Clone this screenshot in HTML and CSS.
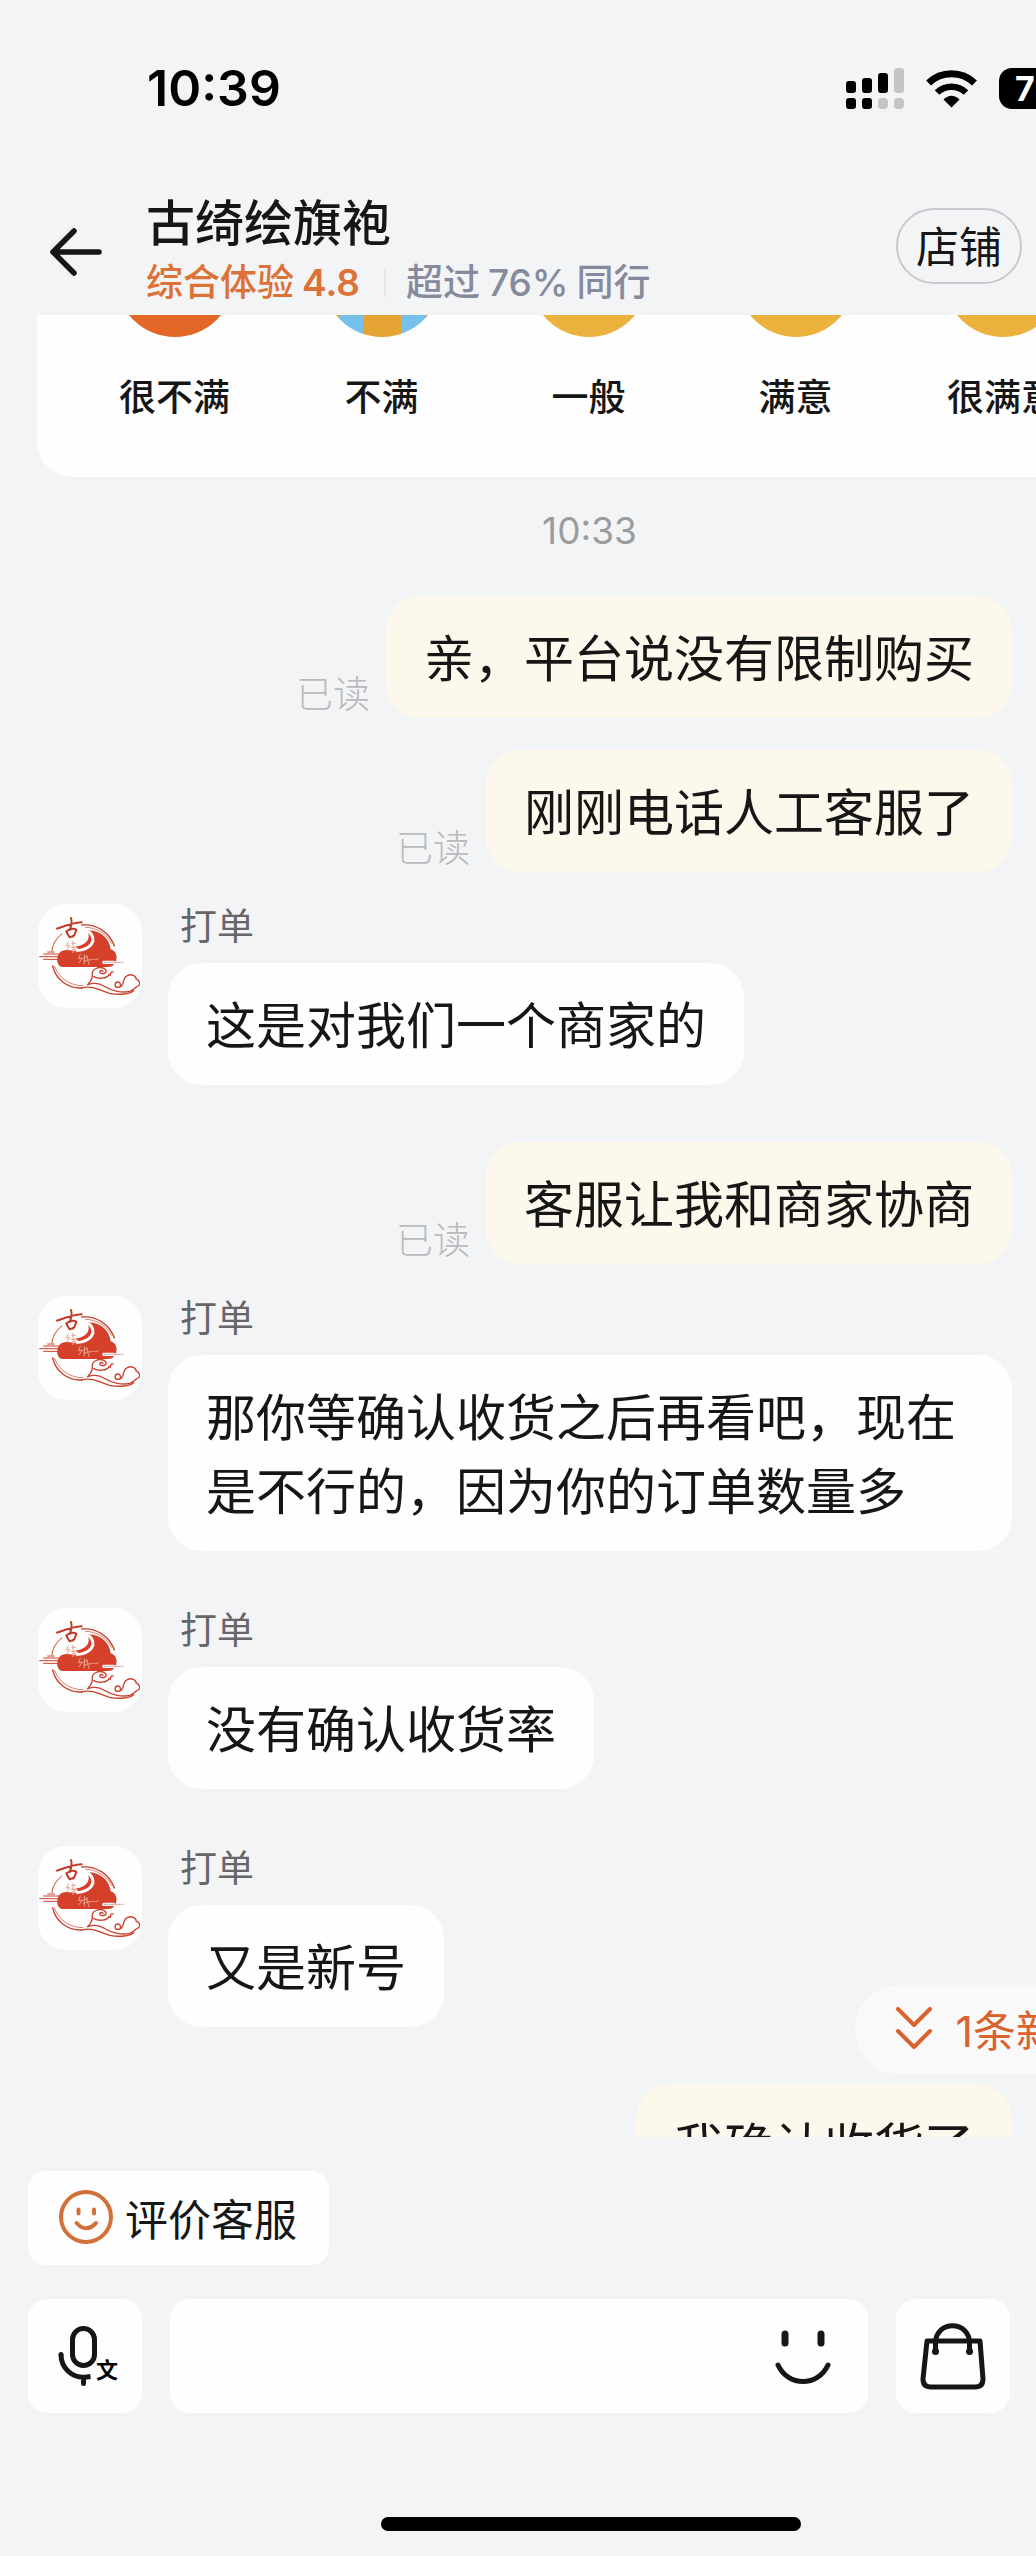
FILE: index.html
```
<!DOCTYPE html>
<html lang="zh-CN">
<head>
    <meta charset="UTF-8">
    <meta name="viewport" content="width=device-width, initial-scale=1.0">
    <title>古绮绘旗袍</title>
    <link rel="stylesheet" href="styles.css">
</head>
<body>
    <!-- 店铺头像 -->
    <svg class="defs" width="0" height="0" aria-hidden="true">
        <symbol id="logo" viewBox="55 42 312 312">
            <g fill="none" stroke="#c9402c" stroke-linecap="round">
                <path d="M186 105C230 100 270 128 284 168" stroke-width="4"/>
                <path d="M198 112C232 112 262 134 276 160" stroke-width="2"/>
                <path d="M126 132C108 148 98 164 97 182" stroke-width="3"/>
                <path d="M99 228C108 268 144 296 186 294" stroke-width="4"/>
                <path d="M104 228C116 262 150 288 190 287" stroke-width="2"/>
                <path d="M60 200H122M72 192H120M72 208H122M84 186H104" stroke-width="3"/>
                <path d="M204 284C222 278 240 280 252 288C274 302 306 310 330 304C344 300 348 290 358 286C364 278 356 268 350 268C348 254 330 250 318 260C310 268 314 274 308 284C302 296 286 294 286 284C288 272 304 274 302 286" stroke-width="4"/>
                <path d="M186 294C220 284 246 304 270 310C300 316 330 312 342 302M204 284C212 276 218 268 218 256C214 236 240 228 254 236C266 244 256 254 244 250C234 244 246 238 250 244M222 260C238 268 262 266 268 254C276 262 268 242 280 246" stroke-width="4"/>
            </g>
            <path d="M206 120C248 122 270 150 273 178C290 182 296 204 286 218C282 226 276 231 264 231H128C108 228 108 190 128 182C144 176 160 184 176 182C200 184 238 160 206 120Z" fill="#d5402b"/>
            <path d="M166 168C192 166 212 154 204 128C228 148 212 172 176 177Z" fill="#d5402b"/>
            <path d="M208 122C236 150 218 180 170 183" fill="none" stroke="#fff" stroke-width="6"/>
            <path d="M204 128C212 152 192 166 160 170" fill="none" stroke="#fff" stroke-width="3"/>
            <g fill="none" stroke="#c23a28" stroke-width="6" stroke-linecap="round" stroke-linejoin="round">
                <path d="M112 116C134 108 160 98 186 97M154 84C158 96 154 110 150 120M140 124C150 116 164 114 170 120C168 128 164 136 160 140M140 124C142 132 148 138 150 142L164 136"/>
            </g>
            <g fill="none" stroke="#e9a08f" stroke-width="3" stroke-linecap="round" stroke-linejoin="round">
                <path d="M146 156L140 168L150 166L142 180M156 160H168M160 154V188M154 172H170M164 174L170 186"/>
                <path d="M182 192L176 206L188 204L178 218M194 194V222M188 206L204 200M192 214L210 208M200 196L208 224M210 212C218 202 222 214 236 206"/>
            </g>
            <rect x="248" y="212" width="38" height="10" rx="4" fill="#fff"/>
            <path d="M254 217H312" stroke="#c98a7e" stroke-width="3" stroke-dasharray="5 2"/>
        </symbol>
    </svg>

    <div class="status-bar">
        <span class="clock">10:39</span>
        <div class="status-icons">
            <svg class="signal" viewBox="0 0 58 41" aria-hidden="true">
                <g fill="#000">
                    <rect x="0" y="13" width="10" height="12" rx="3"/>
                    <rect x="16" y="10" width="10" height="15" rx="3"/>
                    <rect x="32" y="5" width="10" height="20" rx="3"/>
                    <rect x="0" y="30" width="10" height="11" rx="3"/>
                    <rect x="16" y="30" width="10" height="11" rx="3"/>
                </g>
                <g fill="#c3c4c6">
                    <rect x="48" y="0" width="10" height="25" rx="3"/>
                    <rect x="32" y="30" width="10" height="11" rx="4"/>
                    <rect x="48" y="30" width="10" height="11" rx="4"/>
                </g>
            </svg>
            <svg class="wifi" viewBox="0 0 51 41" aria-hidden="true">
                <path d="M2.5 15A33 33 0 0 1 48.500 15" fill="none" stroke="#000" stroke-width="7"/>
                <path d="M11 24.500A21 21 0 0 1 40 24.500" fill="none" stroke="#000" stroke-width="6.500"/>
                <path d="M17.500 31.500Q25.500 24 33.500 31.500L25.500 39.500Z"/>
            </svg>
            <span class="battery">71</span>
        </div>
    </div>

    <header class="header">
        <button class="back" type="button" aria-label="返回">
            <svg viewBox="0 0 52 48" aria-hidden="true">
                <path d="M24 3L3 24L24 45M3 24H49" fill="none" stroke="#161616" stroke-width="5.500" stroke-linecap="round" stroke-linejoin="round"/>
            </svg>
        </button>
        <div class="shop">
            <h1>古绮绘旗袍</h1>
            <p class="score">
                <span class="rate">综合体验<b>4.8</b></span>
                <span class="rank">超过<b>76%</b>同行</span>
            </p>
        </div>
        <button class="shop-btn" type="button">店铺</button>
    </header>

    <main class="chat">
        <section class="rating-card">
            <button type="button" class="rating"><span class="face angry"></span>很不满</button>
            <button type="button" class="rating"><span class="face crying"></span>不满</button>
            <button type="button" class="rating"><span class="face"></span>一般</button>
            <button type="button" class="rating"><span class="face"></span>满意</button>
            <button type="button" class="rating"><span class="face"></span>很满意</button>
        </section>

        <time class="time">10:33</time>

        <div class="msg mine">
            <span class="read">已读</span>
            <p class="bubble">亲，平台说没有限制购买</p>
        </div>
        <div class="msg mine">
            <span class="read">已读</span>
            <p class="bubble">刚刚电话人工客服了</p>
        </div>
        <div class="msg theirs">
            <svg class="avatar" aria-hidden="true"><use href="#logo"/></svg>
            <div class="content">
                <span class="name">打单</span>
                <p class="bubble">这是对我们一个商家的</p>
            </div>
        </div>
        <div class="msg mine">
            <span class="read">已读</span>
            <p class="bubble">客服让我和商家协商</p>
        </div>
        <div class="msg theirs">
            <svg class="avatar" aria-hidden="true"><use href="#logo"/></svg>
            <div class="content">
                <span class="name">打单</span>
                <p class="bubble">那你等确认收货之后再看吧，现在是不行的，因为你的订单数量多</p>
            </div>
        </div>
        <div class="msg theirs">
            <svg class="avatar" aria-hidden="true"><use href="#logo"/></svg>
            <div class="content">
                <span class="name">打单</span>
                <p class="bubble">没有确认收货率</p>
            </div>
        </div>
        <div class="msg theirs">
            <svg class="avatar" aria-hidden="true"><use href="#logo"/></svg>
            <div class="content">
                <span class="name">打单</span>
                <p class="bubble">又是新号</p>
            </div>
        </div>
        <div class="msg mine">
            <p class="bubble">我确认收货了</p>
        </div>

        <button class="new-msg" type="button">
            <svg viewBox="0 0 36 42" aria-hidden="true">
                <path d="M2 2L18 18L34 2M2 24L18 40L34 24" fill="none" stroke="#d9622f" stroke-width="4" stroke-linecap="round" stroke-linejoin="round"/>
            </svg>
            1条新消息
        </button>
    </main>

    <footer class="footer">
        <button class="rate-btn" type="button">
            <svg viewBox="0 0 54 54" aria-hidden="true">
                <g fill="none" stroke="#d2703a" stroke-width="4" stroke-linecap="round">
                    <circle cx="27" cy="27" r="25"/>
                    <path d="M19.500 19.500V23.500M35 19.500V23.500M17.500 33Q27 43.500 37 33"/>
                </g>
            </svg>
            评价客服
        </button>
        <div class="input-row">
            <button class="square-btn" type="button" aria-label="语音转文字">
                <svg viewBox="0 0 114 114" aria-hidden="true">
                    <rect x="44.500" y="29.500" width="22" height="37" rx="11" fill="none" stroke="#161616" stroke-width="5"/>
                    <path d="M33 55.500C33 69 44 79 57 78.200L62.500 77.500M55.500 79V84.500" fill="none" stroke="#161616" stroke-width="5" stroke-linejoin="round"/>
                    <circle cx="33" cy="55.500" r="2.500" fill="#161616"/>
                    <circle cx="55.500" cy="84.500" r="2.500" fill="#161616"/>
                    <text class="mic-text" x="68" y="79">文</text>
                </svg>
            </button>
            <div class="input-box">
                <input type="text" aria-label="输入消息">
                <button class="emoji-btn" type="button" aria-label="表情">
                    <svg viewBox="0 0 56 56" aria-hidden="true">
                        <path d="M10 6V15M46 6V15" fill="none" stroke="#161616" stroke-width="7" stroke-linecap="round"/>
                        <path d="M3 37C13 59 43 59 53 37" fill="none" stroke="#161616" stroke-width="5" stroke-linecap="round"/>
                    </svg>
                </button>
            </div>
            <button class="square-btn" type="button" aria-label="购物袋">
                <svg viewBox="0 0 114 114" aria-hidden="true">
                    <g fill="none" stroke="#161616" stroke-width="5" stroke-linejoin="round">
                        <path d="M31 42H84L87 80Q87 88 79 88H35Q27 88 27 80Z"/>
                        <path d="M39.500 52V44C39.500 21 73.500 21 73.500 44V52"/>
                    </g>
                    <circle cx="39.500" cy="52.500" r="3.500" fill="#161616"/>
                    <circle cx="73.500" cy="52.500" r="3.500" fill="#161616"/>
                </svg>
            </button>
        </div>
        <div class="home-bar"></div>
    </footer>
</body>
</html>
```
FILE: styles.css
```
* {
    box-sizing: border-box;
}
body {
    display: flex;
    flex-direction: column;
    height: 100vh;
    margin: 0;
    overflow: hidden;
    background-color: #f3f4f6;
    color: #161616;
    font-family: Inter, "Noto Sans CJK SC", sans-serif;
}
h1, p {
    margin: 0;
}
button {
    padding: 0;
    border: none;
    background: none;
    color: inherit;
    font: inherit;
    cursor: pointer;
}
svg {
    display: block;
    flex-shrink: 0;
}
.defs {
    position: absolute;
}

/* 状态栏 */
.status-bar {
    display: flex;
    justify-content: space-between;
    align-items: center;
    height: 176px;
    padding-left: 147px;
    overflow: hidden;
    flex-shrink: 0;
}
.clock {
    font-size: 50px;
    font-weight: 600;
    color: #000;
}
.status-icons {
    display: flex;
    align-items: center;
    gap: 22px;
    margin-right: -43px;
}
.signal {
    width: 58px;
    height: 41px;
}
.wifi {
    width: 51px;
    height: 41px;
}
.battery {
    width: 80px;
    height: 41px;
    padding-left: 16px;
    border-radius: 13px;
    background-color: #000;
    color: #fff;
    font-size: 34px;
    font-weight: 700;
    line-height: 41px;
}

/* 顶部店铺信息 */
.header {
    display: flex;
    height: 139px;
    padding: 0 14px 0 50px;
    flex-shrink: 0;
}
.back {
    width: 52px;
    height: 48px;
    margin: 52px 44px 0 0;
}
.shop {
    flex: 1;
    padding-top: 18px;
}
.shop h1 {
    font-size: 49px;
    font-weight: 500;
    line-height: 60px;
}
.score {
    display: flex;
    align-items: center;
    font-size: 37px;
    font-weight: 500;
    line-height: 58px;
    white-space: nowrap;
}
.score b {
    margin-left: 8px;
    font-weight: 600;
}
.rate {
    padding-right: 24px;
    color: #dd7238;
}
.rank {
    padding-left: 22px;
    color: #858b9c;
    background: linear-gradient(#e6e7ea, #e6e7ea) left center / 2px 28px no-repeat;
}
.rank b {
    margin-right: 8px;
    font-weight: 500;
}
.shop-btn {
    width: 126px;
    height: 76px;
    margin-top: 32px;
    padding-bottom: 4px;
    border: 2px solid #c8c9cc;
    border-radius: 38px;
    font-size: 43px;
}

/* 聊天区 */
.chat {
    position: relative;
    display: flex;
    flex-direction: column;
    flex: 1;
    min-height: 0;
    overflow: hidden;
}
.rating-card {
    display: flex;
    flex-shrink: 0;
    margin: -120px -106px 0 37px;
    padding: 24px 36px 56px 34px;
    border-radius: 36px;
    background-color: #fefefe;
}
.rating {
    flex: 1;
    font-size: 37px;
    font-weight: 500;
    line-height: 46px;
}
.face {
    display: block;
    width: 118px;
    height: 118px;
    margin: 0 auto 38px;
    border-radius: 50%;
    background-color: #ecb23e;
}
.angry {
    background-color: #e36828;
}
.crying {
    background: linear-gradient(90deg, #e5a333 16px, #76c1ec 16px, #76c1ec 40px, #e5a333 40px, #e5a333 78px, #76c1ec 78px, #76c1ec 102px, #e5a333 102px);
}
.time {
    margin: 31px 0 42px;
    padding-left: 143px;
    color: #9b9c9e;
    font-size: 37px;
    line-height: 46px;
    text-align: center;
}
.msg {
    display: flex;
    flex-shrink: 0;
    padding: 0 24px 0 38px;
}
.mine {
    justify-content: flex-end;
    align-items: flex-end;
    gap: 16px;
    margin-bottom: 32px;
}
.theirs {
    gap: 26px;
    margin-bottom: 57px;
}
.read {
    color: #b9babc;
    font-size: 37px;
    font-weight: 300;
    line-height: 46px;
}
.avatar {
    width: 104px;
    height: 104px;
    border-radius: 28px;
    background-color: #fefefe;
}
.content {
    display: flex;
    flex-direction: column;
    align-items: flex-start;
}
.name {
    margin: 0 0 13px 12px;
    color: #666;
    font-size: 37px;
    line-height: 46px;
}
.bubble {
    padding: 26px 38px 22px;
    border-radius: 34px;
    background-color: #fefefe;
    font-size: 50px;
    line-height: 74px;
}
.mine .bubble {
    background-color: #fdf8ec;
}
.new-msg {
    position: absolute;
    right: -143px;
    bottom: 63px;
    display: flex;
    align-items: center;
    gap: 24px;
    height: 89px;
    padding: 0 34px 3px 41px;
    border-radius: 44px 0 0 44px;
    background-color: #f9f9f9;
    color: #d9622f;
    font-size: 43px;
    white-space: nowrap;
}
.new-msg svg {
    width: 36px;
    height: 42px;
}

/* 底部输入栏 */
.footer {
    display: flex;
    flex-direction: column;
    flex-shrink: 0;
    gap: 34px;
    padding: 34px 26px 25px 28px;
}
.rate-btn {
    display: flex;
    align-items: center;
    align-self: flex-start;
    gap: 12px;
    height: 94px;
    padding: 0 32px 3px 31px;
    border-radius: 18px;
    background-color: #fefefe;
    font-size: 43px;
}
.rate-btn svg {
    width: 54px;
    height: 54px;
}
.input-row {
    display: flex;
    gap: 28px;
}
.square-btn {
    width: 114px;
    height: 114px;
    border-radius: 20px;
    background-color: #fefefe;
}
.mic-text {
    font-size: 22px;
    font-weight: 700;
}
.input-box {
    display: flex;
    align-items: center;
    flex: 1;
    min-width: 0;
    padding: 0 37px 0 32px;
    border-radius: 20px;
    background-color: #fefefe;
}
.input-box input {
    flex: 1;
    min-width: 0;
    height: 100%;
    border: none;
    outline: none;
    background: none;
    font: inherit;
    font-size: 43px;
}
.emoji-btn svg {
    width: 56px;
    height: 56px;
}
.home-bar {
    align-self: center;
    width: 420px;
    height: 14px;
    margin: 70px 0 0 143px;
    border-radius: 7px;
    background-color: #000;
}
```
